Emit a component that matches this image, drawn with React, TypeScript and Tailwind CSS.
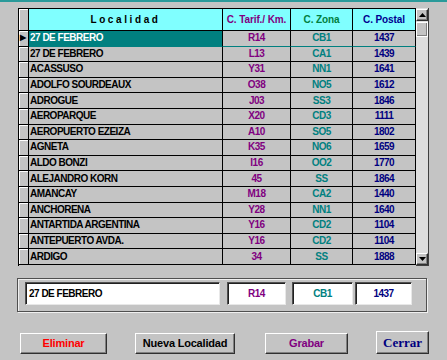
import React from "react";

type Row = { loc: string; tarif: string; zona: string; postal: string };

const rows: Row[] = [
  { loc: "27 DE FEBRERO", tarif: "R14", zona: "CB1", postal: "1437" },
  { loc: "27 DE FEBRERO", tarif: "L13", zona: "CA1", postal: "1439" },
  { loc: "ACASSUSO", tarif: "Y31", zona: "NN1", postal: "1641" },
  { loc: "ADOLFO SOURDEAUX", tarif: "O38", zona: "NO5", postal: "1612" },
  { loc: "ADROGUE", tarif: "J03", zona: "SS3", postal: "1846" },
  { loc: "AEROPARQUE", tarif: "X20", zona: "CD3", postal: "1111" },
  { loc: "AEROPUERTO EZEIZA", tarif: "A10", zona: "SO5", postal: "1802" },
  { loc: "AGNETA", tarif: "K35", zona: "NO6", postal: "1659" },
  { loc: "ALDO BONZI", tarif: "I16", zona: "OO2", postal: "1770" },
  { loc: "ALEJANDRO KORN", tarif: "45", zona: "SS", postal: "1864" },
  { loc: "AMANCAY", tarif: "M18", zona: "CA2", postal: "1440" },
  { loc: "ANCHORENA", tarif: "Y28", zona: "NN1", postal: "1640" },
  { loc: "ANTARTIDA ARGENTINA", tarif: "Y16", zona: "CD2", postal: "1104" },
  { loc: "ANTEPUERTO AVDA.", tarif: "Y16", zona: "CD2", postal: "1104" },
  { loc: "ARDIGO", tarif: "34", zona: "SS", postal: "1888" },
];

const cols = "grid grid-cols-[10px_194px_68px_62px_63px]";
const raised =
  "bg-[#c4c4c4] border-t border-l border-t-white border-l-white border-r border-b border-r-[#303030] border-b-[#303030] shadow-[inset_-1px_-1px_0_#808080]";
const sunken =
  "bg-white border-t border-l border-t-[#505050] border-l-[#505050] border-r border-b border-r-[#e8e8e8] border-b-[#e8e8e8] shadow-[inset_1px_1px_0_#202020]";

function Triangle({ up }: { up: boolean }) {
  return (
    <svg width="7" height="4" viewBox="0 0 7 4">
      {up ? <polygon points="0,4 7,4 3.5,0" fill="#000" /> : <polygon points="0,0 7,0 3.5,4" fill="#000" />}
    </svg>
  );
}

export default function App() {
  return (
    <div className="w-[447px] h-[360px] overflow-hidden bg-[#c4c4c4] border-t-2 border-[#2a9a9a] font-['Liberation_Sans',Arial,sans-serif] font-bold text-[10px] tracking-[-0.5px]">
      {/* grid */}
      <div className="flex ml-[18px] mt-[6px]">
        <div className="border-l border-t border-black">
          <div className={`${cols} h-[22px] tracking-[-0.1px]`}>
            <div className="bg-[#c4c4c4] border-r border-b border-black shadow-[inset_1px_1px_0_#fff]" />
            <div className="bg-[#80ffff] border-r border-b border-black flex items-center justify-center tracking-[2.6px] text-black">
              Localidad
            </div>
            <div className="bg-[#80ffff] border-r border-b border-black flex items-center justify-center text-[#800080]">
              C. Tarif./ Km.
            </div>
            <div className="bg-[#80ffff] border-r border-b border-black flex items-center justify-center text-[#008040]">
              C. Zona
            </div>
            <div className="bg-[#80ffff] border-r border-b border-black flex items-center justify-center text-[#000090]">
              C. Postal
            </div>
          </div>
          {rows.map((r, i) => {
            const sel = i === 0;
            const line = sel ? "border-b-[#008080]" : "border-b-black";
            return (
              <div key={i} className={`${cols} h-[15.6px] leading-none`}>
                <div className="bg-[#c4c4c4] border-r border-b border-black shadow-[inset_1px_1px_0_#fff] flex items-center">
                  {sel && <span className="text-[8px] ml-[1px] -mt-[1px]">▶</span>}
                </div>
                <div
                  className={`border-r border-b border-black flex items-center pl-[1px] ${
                    sel ? "bg-[#008080] text-white border-b-[#008080]" : "bg-[#c4c4c4] text-black"
                  }`}
                >
                  {r.loc}
                </div>
                <div className={`bg-[#c4c4c4] border-r border-b border-black ${line} flex items-center justify-center text-[#800080]`}>
                  {r.tarif}
                </div>
                <div className={`bg-[#c4c4c4] border-r border-b border-black ${line} flex items-center justify-center text-[#008080]`}>
                  {r.zona}
                </div>
                <div className={`bg-[#c4c4c4] border-r border-b border-black ${line} flex items-center justify-center text-[#000080]`}>
                  {r.postal}
                </div>
              </div>
            );
          })}
        </div>
        {/* scrollbar */}
        <div className="w-[13px] h-[258px] flex flex-col bg-[#dedede] border-r border-b border-[#404040]">
          <div className={`h-[12px] mt-[1px] flex items-center justify-center ${raised}`}>
            <Triangle up />
          </div>
          <div className="h-[15px] mt-[1px] bg-[#c4c4c4] border border-white shadow-[inset_-1px_-1px_0_#808080]" />
          <div className="flex-1" />
          <div className={`h-[12px] flex items-center justify-center ${raised}`}>
            <Triangle up={false} />
          </div>
        </div>
      </div>

      {/* detail panel */}
      <div className="ml-[17px] mt-[12px] w-[410px] h-[34px] border border-[#505050] shadow-[1px_1px_0_#f0f0f0,inset_1px_1px_0_#f0f0f0] flex items-start pt-[3px] pl-[7px] text-[10px]">
        <div className={`w-[195px] h-[23px] ${sunken} flex items-center pl-[3px] text-black`}>27 DE FEBRERO</div>
        <div className={`w-[59px] h-[23px] ml-[7px] ${sunken} flex items-center justify-center text-[#800080]`}>R14</div>
        <div className={`w-[61px] h-[23px] ml-[6px] ${sunken} flex items-center justify-center text-[#008080]`}>CB1</div>
        <div className={`w-[57px] h-[23px] ml-[2px] ${sunken} flex items-center justify-center text-[#000080]`}>1437</div>
      </div>

      {/* buttons */}
      <div className="flex items-end mt-[19px] h-[23px] text-[11px] tracking-[-0.2px]">
        <button className={`ml-[20px] w-[87px] h-[21px] ${raised} text-[#ff0000] font-bold`}>Eliminar</button>
        <button className={`ml-[28px] w-[100px] h-[21px] ${raised} text-black font-bold`}>Nueva Localidad</button>
        <button className={`ml-[30px] w-[83px] h-[21px] ${raised} text-[#800080] font-bold`}>Grabar</button>
        <button
          className={`ml-[28px] w-[53px] h-[23px] ${raised} text-[#000080] font-bold font-['Liberation_Serif',serif] text-[13px] tracking-normal`}
        >
          Cerrar
        </button>
      </div>
    </div>
  );
}
